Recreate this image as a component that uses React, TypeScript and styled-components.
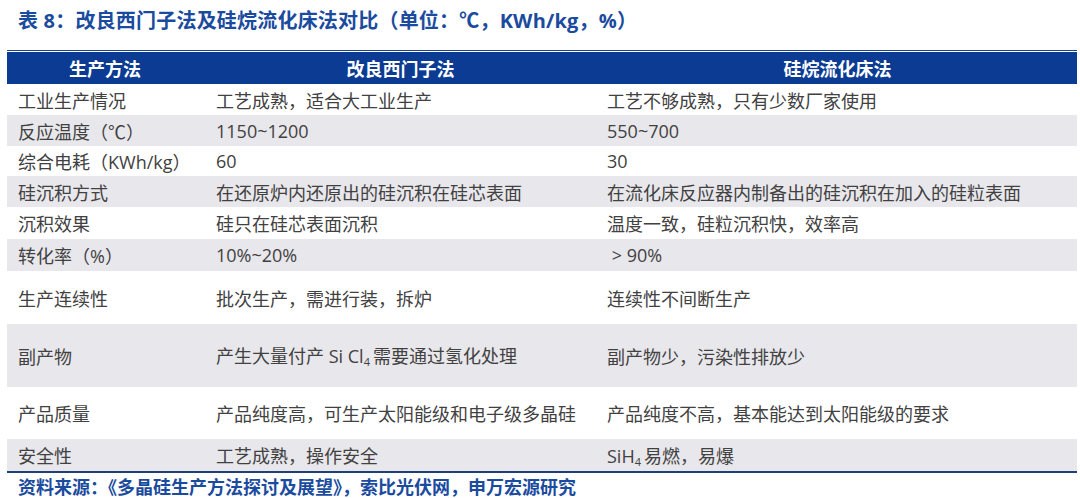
import React from "react";
import styled, { createGlobalStyle } from "styled-components";

const GlobalStyle = createGlobalStyle`
  html, body {
    margin: 0;
    padding: 0;
    background: #ffffff;
  }
  body {
    width: 1080px;
    height: 498px;
    overflow: hidden;
    font-family: "Open Sans", "Noto Sans CJK SC", sans-serif;
  }
`;

const Page = styled.div`
  display: flex;
  flex-direction: column;
  padding: 0 3px 0 7px;
  width: 1080px;
  height: 498px;
  box-sizing: border-box;
`;

const Title = styled.h1`
  margin: 7px 0 0 11px;
  height: 43px;
  font-size: 20px;
  line-height: 28px;
  font-weight: 700;
  color: #1b4b9e;
  letter-spacing: 0.2px;
`;

const Table = styled.div`
  display: flex;
  flex-direction: column;
  border-top: 1px solid #1a4690;
  border-bottom: 2px solid #1f3f78;
  padding-top: 1px;
`;

interface RowProps {
  h: number;
  shade?: boolean;
}

const Row = styled.div<RowProps>`
  display: grid;
  grid-template-columns: 196px 395px 1fr;
  height: ${(p) => p.h}px;
  align-items: center;
  background: ${(p) => (p.shade ? "#e8e7eb" : "#ffffff")};
`;

const HeadRow = styled(Row)`
  background: #0b3b92;
`;

const HeadCell = styled.div`
  text-align: center;
  color: #ffffff;
  font-weight: 700;
  font-size: 18px;
  font-family: "Noto Sans CJK SC", sans-serif;
`;

interface CellProps {
  pad?: number;
}

const Cell = styled.div<CellProps>`
  padding-left: ${(p) => p.pad ?? 11}px;
  font-size: 18px;
  color: #414141;
  white-space: nowrap;
`;

const Sub = styled.span`
  font-size: 11px;
  vertical-align: -3px;
  margin-right: 3px;
`;

const Source = styled.div`
  margin: 1px 0 0 11px;
  font-size: 18px;
  line-height: 24px;
  font-weight: 700;
  color: #1b4b9e;
  font-family: "Noto Sans CJK SC", sans-serif;
`;

type Line = {
  h: number;
  shade?: boolean;
  cells: React.ReactNode[];
};

const rows: Line[] = [
  { h: 31, cells: ["工业生产情况", "工艺成熟，适合大工业生产", "工艺不够成熟，只有少数厂家使用"] },
  { h: 31, shade: true, cells: ["反应温度（℃）", "1150~1200", "550~700"] },
  { h: 30, cells: ["综合电耗（KWh/kg）", "60", "30"] },
  { h: 31, shade: true, cells: ["硅沉积方式", "在还原炉内还原出的硅沉积在硅芯表面", "在流化床反应器内制备出的硅沉积在加入的硅粒表面"] },
  { h: 32, cells: ["沉积效果", "硅只在硅芯表面沉积", "温度一致，硅粒沉积快，效率高"] },
  { h: 32, shade: true, cells: ["转化率（%）", "10%~20%", "\u00a0> 90%"] },
  { h: 53, cells: ["生产连续性", "批次生产，需进行装，拆炉", "连续性不间断生产"] },
  {
    h: 63,
    shade: true,
    cells: [
      "副产物",
      <>
        产生大量付产 Si Cl<Sub>4</Sub>需要通过氢化处理
      </>,
      "副产物少，污染性排放少",
    ],
  },
  { h: 52, cells: ["产品质量", "产品纯度高，可生产太阳能级和电子级多晶硅", "产品纯度不高，基本能达到太阳能级的要求"] },
  {
    h: 32,
    shade: true,
    cells: [
      "安全性",
      "工艺成熟，操作安全",
      <>
        SiH<Sub>4</Sub>易燃，易爆
      </>,
    ],
  },
];

const pads = [11, 13, 9];

export default function App() {
  return (
    <>
      <GlobalStyle />
      <Page>
        <Title>表 8：改良西门子法及硅烷流化床法对比（单位：℃，KWh/kg，%）</Title>
        <Table>
          <HeadRow h={32}>
            <HeadCell>生产方法</HeadCell>
            <HeadCell>改良西门子法</HeadCell>
            <HeadCell>硅烷流化床法</HeadCell>
          </HeadRow>
          {rows.map((r, i) => (
            <Row key={i} h={r.h} shade={r.shade}>
              {r.cells.map((c, j) => (
                <Cell key={j} pad={pads[j]}>
                  {c}
                </Cell>
              ))}
            </Row>
          ))}
        </Table>
        <Source>资料来源：《多晶硅生产方法探讨及展望》，索比光伏网，申万宏源研究</Source>
      </Page>
    </>
  );
}
